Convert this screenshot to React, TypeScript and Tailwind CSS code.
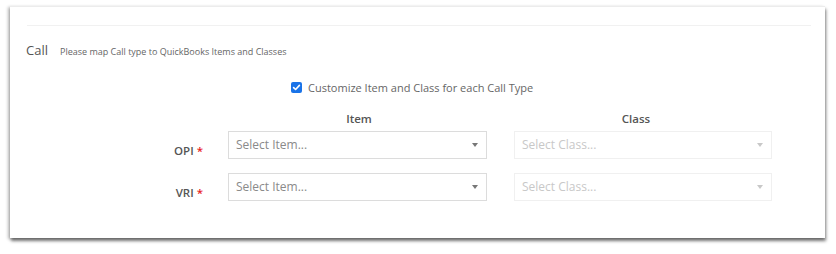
import React from "react";

function Caret({ light }: { light?: boolean }) {
  return (
    <svg width="6" height="4" viewBox="0 0 6 4" className="shrink-0">
      <path d="M0 0 L6 0 L3 4 Z" fill={light ? "#c8c8c8" : "#777"} />
    </svg>
  );
}

function Select({ placeholder, disabled }: { placeholder: string; disabled?: boolean }) {
  return (
    <div
      className={
        "flex h-[28px] items-center justify-between border pl-[7px] pr-[8px] " +
        (disabled ? "w-[258px] border-[#f0f0f0]" : "w-[259px] border-[#dcdcdc]")
      }
    >
      <span className={"text-[12px] " + (disabled ? "text-[#c8c8c8]" : "text-[#8a8a8a]")}>{placeholder}</span>
      <Caret light={disabled} />
    </div>
  );
}

function Row({ label }: { label: string }) {
  return (
    <div className="flex items-start">
      <div className="mt-[12px] w-[61px] text-right text-[11.5px] leading-[16px] font-semibold text-[#555]">
        {label} <span className="text-[#e8201e]">*</span>
      </div>
      <div className="ml-[25px]">
        <Select placeholder="Select Item..." />
      </div>
      <div className="ml-[27px]">
        <Select placeholder="Select Class..." disabled />
      </div>
    </div>
  );
}

export default function App() {
  return (
    <div className="h-[254px] w-[836px] bg-white pl-[10px] pt-[6px]" style={{ fontFamily: '"Open Sans", sans-serif' }}>
      <div className="h-[232px] w-[815px] border-t border-[#ececec] bg-white shadow-[1px_3px_3px_rgba(0,0,0,0.5),-2px_1px_3px_rgba(0,0,0,0.25)]">
        <div className="ml-[17px] mr-[14px] mt-[18px] h-px bg-[#f1f1f1]" />
        <div className="ml-[16px] mt-[15px] flex items-baseline">
          <span className="text-[13px] text-[#555]">Call</span>
          <span className="ml-[12px] text-[9px] text-[#666]">Please map Call type to QuickBooks Items and Classes</span>
        </div>
        <div className="mt-[19px] flex items-center pl-[281px]">
          <span className="flex h-[11px] w-[11px] items-center justify-center rounded-[2px] bg-[#1a73e8]">
            <svg width="9" height="9" viewBox="0 0 9 9">
              <path d="M1.6 4.6 L3.6 6.5 L7.4 2.4" stroke="white" strokeWidth="1.6" fill="none" strokeLinecap="round" strokeLinejoin="round" />
            </svg>
          </span>
          <span className="ml-[6px] text-[11px] text-[#666]">Customize Item and Class for each Call Type</span>
        </div>
        <div className="mt-[14px] flex pl-[218px] text-[11.5px] font-semibold text-[#555]">
          <div className="w-[262px] text-center">Item</div>
          <div className="ml-[15px] w-[262px] text-center">Class</div>
        </div>
        <div className="mt-[4px] flex flex-col gap-[14px] pl-[132px]">
          <Row label="OPI" />
          <Row label="VRI" />
        </div>
      </div>
    </div>
  );
}
